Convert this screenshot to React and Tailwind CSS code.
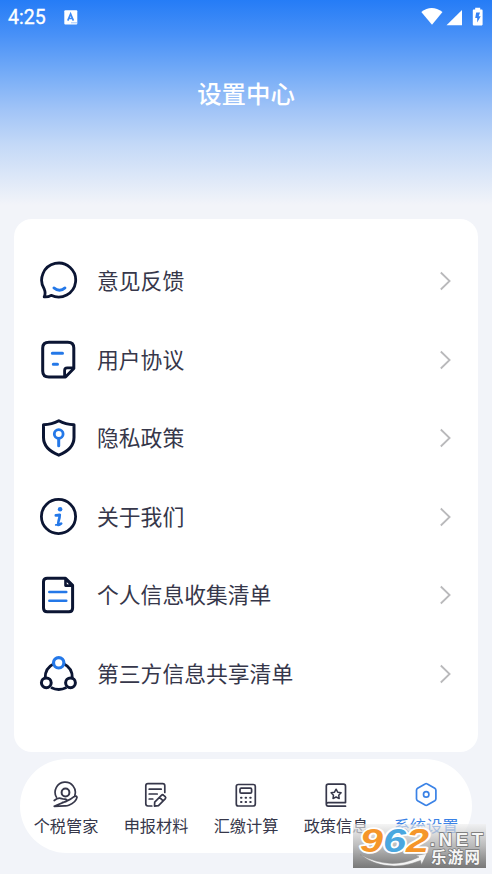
import { useState } from 'react';

const NAVY = '#0b1533';
const BLUE = '#2478e8';

const FeedbackIcon = () => (
  <g transform="translate(0.6 0.7)">
    <path d="M11.5 33.6Q8.5 35.6 4.6 35.2Q6.4 31.5 4.6 27.3A17 17 0 1 1 11.5 33.6Z" stroke={NAVY} strokeWidth="2.8" strokeLinejoin="round" />
    <path d="M14.3 26.2Q20 31 25.4 26.2" stroke={BLUE} strokeWidth="2.8" strokeLinecap="round" />
  </g>
);

const AgreementIcon = () => (
  <>
    <path d="M10 2.2H28.8Q34.8 2.2 34.8 8V28.5L26.5 37H10Q3.7 37 3.7 31V8Q3.7 2.2 10 2.2Z" stroke={NAVY} strokeWidth="3" strokeLinejoin="round" />
    <path d="M25.6 36.8V30.5Q25.6 27.9 28.2 27.9H35" stroke={NAVY} strokeWidth="2.8" />
    <path d="M13.3 13.2H23.5M14.3 24.2H18.5" stroke={BLUE} strokeWidth="3" strokeLinecap="round" />
  </>
);

const ShieldIcon = () => (
  <>
    <path d="M19.8 2.8Q26.5 6.6 35 6.7V19.5Q35 31 19.8 37.2Q4.5 31 4.5 19.5V6.7Q13 6.6 19.8 2.8Z" stroke={NAVY} strokeWidth="3" strokeLinejoin="round" />
    <circle cx="19.7" cy="16" r="4.4" stroke={BLUE} strokeWidth="2.8" />
    <path d="M19.7 20.5V27.8" stroke={BLUE} strokeWidth="3" strokeLinecap="round" />
  </>
);

const InfoIcon = () => (
  <>
    <circle cx="19.5" cy="19.5" r="17.1" stroke={NAVY} strokeWidth="2.8" />
    <circle cx="21.1" cy="12.3" r="2.3" fill={BLUE} />
    <path d="M16.8 18.4Q19.5 18.4 20.8 17.8Q20.8 20.5 19.6 24Q18.8 27.6 19.3 28Q20.2 28.3 22.2 26.6" stroke={BLUE} strokeWidth="2.6" strokeLinecap="round" strokeLinejoin="round" />
    <path d="M16.8 27.9H20" stroke={BLUE} strokeWidth="1.8" strokeLinecap="round" />
  </>
);

const ListIcon = () => (
  <>
    <path d="M8.2 3.2H26.5L33.6 10.4V33Q33.6 36.8 30 36.8H8.2Q4.5 36.8 4.5 33V6.8Q4.5 3.2 8.2 3.2Z" stroke={NAVY} strokeWidth="3" strokeLinejoin="round" />
    <path d="M26.5 3.8V10.6H33.2Z" stroke={NAVY} strokeWidth="2.6" strokeLinejoin="round" />
    <path d="M10.3 16.9H27.3M10.3 25.8H27.3" stroke={BLUE} strokeWidth="2.5" strokeLinecap="round" />
  </>
);

const ShareIcon = () => (
  <>
    <path d="M14.5 10Q6 14 6.2 24M25 10Q33.5 14 33.3 24M12 33.5Q19.7 37.5 27.5 33.5" stroke={NAVY} strokeWidth="2.8" />
    <circle cx="19.7" cy="8.8" r="5.2" stroke={BLUE} strokeWidth="3.2" />
    <circle cx="7.3" cy="28.8" r="4.9" stroke={NAVY} strokeWidth="3" />
    <circle cx="31.5" cy="28.8" r="4.9" stroke={NAVY} strokeWidth="3" />
  </>
);

const ManagerIcon = () => (
  <>
    <path d="M4.4 16.2A10.1 10.1 0 1 1 22.8 14.4" />
    <circle cx="13.5" cy="11.5" r="3.9" strokeWidth="2" />
    <path d="M2.2 19.5Q6.5 16.3 9.5 17.6Q11 18.3 13.2 18.2Q15.8 18.8 14.5 20.4Q13.5 21.3 10.5 21.3M15 19.9Q19.5 18 22 15.7Q24.8 14.2 25 16.3Q24 21.2 16.8 24.2Q14.8 25.1 12.5 24.9L2.2 25.3Z" />
  </>
);

const MaterialIcon = () => (
  <>
    <path d="M22.8 11.5V4.8Q22.8 2.6 20.6 2.6H6Q3.8 2.6 3.8 4.8V22.8Q3.8 25 6 25H9.8" />
    <path d="M7.2 8.2H19.2M7.2 13H15.2M7.2 18H10.8" />
    <path d="M19.4 14.3Q20.6 13.2 21.7 14.3L23.2 15.7Q24.3 16.8 23.2 17.9L16.5 24.6L12.5 25.2L12.7 21.1ZM17.5 16.3L21.2 19.9" />
  </>
);

const CalculatorIcon = () => (
  <>
    <rect x="4.3" y="3.5" width="19" height="21.5" rx="2" />
    <rect x="8" y="7.2" width="11.6" height="5" rx="1.2" />
    <path d="M9 16.7H9.5M13.6 16.7H14.1M18.2 16.7H18.7M9 21H9.5M13.6 21H14.1M18.2 21H18.7" strokeWidth="2" />
  </>
);

const PolicyIcon = () => (
  <>
    <path d="M23.5 25.2H6.2Q4.3 25.2 4.3 23V5.2Q4.3 3.2 6.3 3.2H21.5Q23.5 3.2 23.5 5.2V21.6H6.2Q4.3 21.6 4.3 23.4" />
    <path d="M14.1 8.2L15.7 11.2L19.1 11.8L16.7 14.2L17.2 17.5L14.1 16L11 17.5L11.5 14.2L9.1 11.8L12.5 11.2Z" strokeWidth="1.5" />
  </>
);

const SettingsIcon = () => (
  <>
    <path d="M13.1 2.9Q14.2 2.2 15.3 2.9L22.8 7.2Q23.9 7.9 23.9 9.2V17.8Q23.9 19.1 22.8 19.8L15.3 24.1Q14.2 24.8 13.1 24.1L5.6 19.8Q4.5 19.1 4.5 17.8V9.2Q4.5 7.9 5.6 7.2Z" />
    <circle cx="14.2" cy="13.4" r="2.7" />
  </>
);

const settings = [
  { label: '意见反馈', Icon: FeedbackIcon },
  { label: '用户协议', Icon: AgreementIcon },
  { label: '隐私政策', Icon: ShieldIcon },
  { label: '关于我们', Icon: InfoIcon },
  { label: '个人信息收集清单', Icon: ListIcon },
  { label: '第三方信息共享清单', Icon: ShareIcon },
];

const tabs = [
  { label: '个税管家', Icon: ManagerIcon },
  { label: '申报材料', Icon: MaterialIcon },
  { label: '汇缴计算', Icon: CalculatorIcon },
  { label: '政策信息', Icon: PolicyIcon },
  { label: '系统设置', Icon: SettingsIcon },
];

const StatusBar = () => (
  <div className="flex h-[34px] items-center justify-between pl-2 pr-[9px] text-white">
    <div className="flex items-center gap-[18px]">
      <span className="pt-[2px] font-['Roboto',sans-serif] text-[19.5px] leading-none [-webkit-text-stroke:0.3px_white]">4:25</span>
      <svg width="14" height="15" viewBox="0 0 14 15">
        <rect x="0.3" y="0.3" width="13" height="14.2" rx="1" fill="white" />
        <path d="M3.8 10.6L6.6 4L9.4 10.6M5 8.5H8.3" fill="none" stroke="#3e8af5" strokeWidth="1.7" />
        <path d="M7.5 12.8H12.5" stroke="#3e8af5" strokeWidth="1" strokeDasharray="1 1" />
      </svg>
    </div>
    <svg width="62" height="20" viewBox="0 0 62 20" fill="white">
      <path d="M0.3 5Q10.5 -2.8 21.5 5L11 17.8Z" />
      <path d="M41 3V18.3H25.5Z" />
      <path d="M54.2 0.8H59.2V2.6H60.8Q61.6 2.6 61.6 3.4V17.6Q61.6 18.4 60.8 18.4H52.6Q51.8 18.4 51.8 17.6V3.4Q51.8 2.6 52.6 2.6H54.2Z" />
      <path d="M55.2 5.5H59L57.7 9.3H59.7L56.2 15.5V11H54.2Z" fill="#3582f5" />
    </svg>
  </div>
);

const Watermark = () => (
  <div className="absolute left-[353px] top-[824px] h-[44px] w-[133px] bg-linear-to-b from-[#eeeeee]/60 via-[#b4b4b4]/90 to-[#787878]">
    <svg width="133" height="44" viewBox="0 0 133 44">
      <path d="M7 30.5Q38 47 66 33L62.5 31.5L74 29.5L68.5 40.5L67.5 36.5Q33 50 7 30.5Z" fill="#f4f4f4" stroke="#888888" strokeWidth="0.5" />
      <g fontFamily="Liberation Sans, sans-serif" fontWeight="bold" paintOrder="stroke" strokeLinejoin="round">
        <text x="7" y="28" fontSize="34" fontStyle="italic" stroke="white" strokeWidth="3.5" textLength="69" lengthAdjust="spacingAndGlyphs" fill="#f5962a">
          9<tspan fill="#4aa7df">6</tspan>2
        </text>
        <text x="77" y="22" fontSize="18.5" textLength="53" fill="#f6f6f6" stroke="#808080" strokeWidth="1.8">.NET</text>
        <text x="78" y="39" fontSize="15.5" textLength="49" fontFamily="Noto Sans CJK SC, sans-serif" fill="#f6f6f6" stroke="#777777" strokeWidth="1.5">乐游网</text>
      </g>
    </svg>
  </div>
);

export default function App() {
  const [activeTab, setActiveTab] = useState('系统设置');

  return (
    <div className="relative h-[874px] w-[492px] overflow-hidden bg-[#f2f4f9] font-['Noto_Sans_CJK_SC',sans-serif]">
      <header className="h-[219px] bg-[linear-gradient(180deg,#257cf6_0px,#4790f7_34px,#77adf7_75px,#a1c4f7_110px,#c4d9f7_145px,#f2f4f9_205px)]">
        <StatusBar />
        <h1 className="pt-[41px] text-center text-[24.4px] font-medium leading-[36px] text-white">设置中心</h1>
      </header>

      <main className="mr-[14px] ml-[13.5px] h-[533px] rounded-[18px] bg-white pt-[23px]">
        {settings.map(({ label, Icon }) => (
          <button key={label} className="flex h-[78.5px] w-full items-center pr-[27px] pl-[25.5px] text-left">
            <svg width="40" height="40" viewBox="0 0 40 40" fill="none" className="shrink-0">
              <Icon />
            </svg>
            <span className="-mt-[2.5px] ml-[18px] flex-1 text-[21.8px] leading-8 text-[#36374a]">{label}</span>
            <svg width="12" height="20" viewBox="0 0 12 20" fill="none" stroke="#b9b9bb" strokeWidth="1.8">
              <path d="M1.8 1.5L10.6 10L1.8 18.5" />
            </svg>
          </button>
        ))}
      </main>

      <nav className="mx-5 mt-[7px] flex h-[94px] rounded-full bg-white px-[1px]">
        {tabs.map(({ label, Icon }) => (
          <button
            key={label}
            onClick={() => setActiveTab(label)}
            className={`flex flex-1 flex-col items-center pt-[22px] ${activeTab === label ? 'text-[#3a82e6]' : 'text-[#36374a]'}`}
          >
            <svg width="28" height="28" viewBox="0 0 28 28" fill="none" stroke="currentColor" strokeWidth="1.7" strokeLinecap="round" strokeLinejoin="round">
              <Icon />
            </svg>
            <span className="mt-[4px] text-[16.2px] leading-6 whitespace-nowrap">{label}</span>
          </button>
        ))}
      </nav>

      <Watermark />
    </div>
  );
}
